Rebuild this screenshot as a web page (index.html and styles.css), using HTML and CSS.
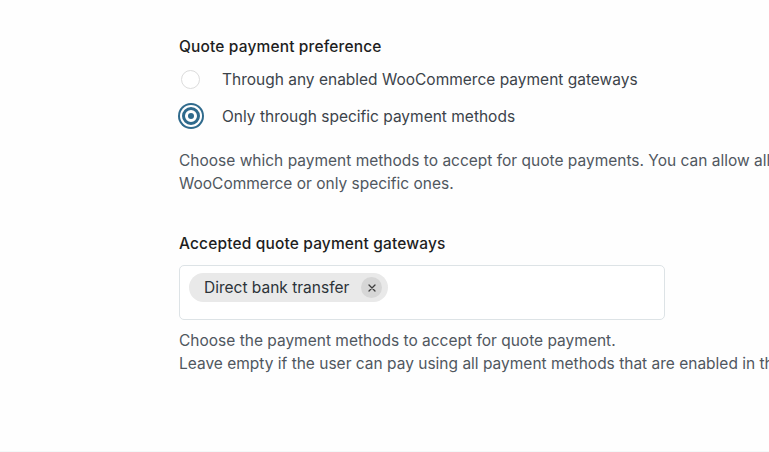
FILE: index.html
```html
<!DOCTYPE html>
<html>
<head>
<meta charset="utf-8">
<link rel="stylesheet" href="styles.css">
</head>
<body>
<div class="page">
  <section class="field">
    <h3 class="label">Quote payment preference</h3>
    <div class="options">
      <label class="option">
        <span class="radio"></span>
        <span class="option-text">Through any enabled WooCommerce payment gateways</span>
      </label>
      <label class="option">
        <span class="radio checked"><span class="dot"></span></span>
        <span class="option-text">Only through specific payment methods</span>
      </label>
    </div>
    <p class="help">
      <span class="line">Choose which payment methods to accept for quote payments. You can allow all payment methods enabled in</span>
      <span class="line">WooCommerce or only specific ones.</span>
    </p>
  </section>

  <section class="field second">
    <h3 class="label">Accepted quote payment gateways</h3>
    <div class="select">
      <span class="chip">
        <span class="chip-text">Direct bank transfer</span>
        <span class="chip-remove">
          <svg width="10" height="10" viewBox="0 0 10 10"><path d="M2 2 L8 8 M8 2 L2 8" stroke="#3c3c3c" stroke-width="1.3" stroke-linecap="round"/></svg>
        </span>
      </span>
    </div>
    <p class="help">
      <span class="line">Choose the payment methods to accept for quote payment.</span>
      <span class="line">Leave empty if the user can pay using all payment methods that are enabled in the WooCommerce settings.</span>
    </p>
  </section>
</div>
</body>
</html>
```
FILE: styles.css
```css
html, body {
  margin: 0;
  padding: 0;
  background: #fefefe;
  overflow: hidden;
  height: 452px;
}
body {
  font-family: Inter, "Noto Sans", sans-serif;
  color: #1e1e1e;
  border-bottom: 1px solid #f3f9f9;
  box-sizing: border-box;
}
.page {
  padding: 36px 0 0 179px;
}
.label {
  margin: 0;
  font-size: 15.5px;
  font-weight: 500;
  letter-spacing: 0.15px;
  line-height: 22px;
  color: #1e1e1e;
}
.options {
  display: flex;
  flex-direction: column;
  gap: 11px;
  margin-top: 8px;
}
.option {
  display: flex;
  align-items: center;
  height: 26px;
}
.radio {
  width: 19px;
  height: 19px;
  box-sizing: border-box;
  border: 1px solid #dcdcdc;
  border-radius: 50%;
  margin-left: 2px;
  margin-right: 22px;
  display: flex;
  align-items: center;
  justify-content: center;
  background: #fff;
}
.radio.checked {
  width: 18px;
  height: 18px;
  margin-left: 3px;
  margin-right: 22px;
  border: 3px solid #2f6a8c;
  box-shadow: 0 0 0 2px #fff, 0 0 0 4px #2f6a8c;
}
.dot {
  width: 6px;
  height: 6px;
  border-radius: 50%;
  background: #2f6a8c;
}
.option-text {
  font-size: 15.5px;
  color: #3c434a;
  white-space: nowrap;
}
.help {
  margin: 20px 0 0;
  font-size: 15.5px;
  line-height: 23px;
  color: #50575e;
}
.line {
  display: block;
  white-space: nowrap;
}
.second {
  margin-top: 38px;
}
.select {
  margin-top: 10px;
  width: 486px;
  height: 55px;
  box-sizing: border-box;
  border: 1px solid #dde3e6;
  border-radius: 5px;
  padding: 7px 9px;
  display: flex;
  align-items: flex-start;
  background: #fff;
}
.chip {
  display: inline-flex;
  align-items: center;
  height: 29px;
  background: #e9e9e9;
  border-radius: 15px;
  padding: 0 6px 0 15px;
  gap: 12px;
}
.chip-text {
  font-size: 15.5px;
  color: #2c3338;
  white-space: nowrap;
}
.chip-remove {
  width: 21px;
  height: 21px;
  border-radius: 50%;
  background: #d6d6d6;
  display: flex;
  align-items: center;
  justify-content: center;
}
.second .help {
  margin-top: 9px;
}
```
